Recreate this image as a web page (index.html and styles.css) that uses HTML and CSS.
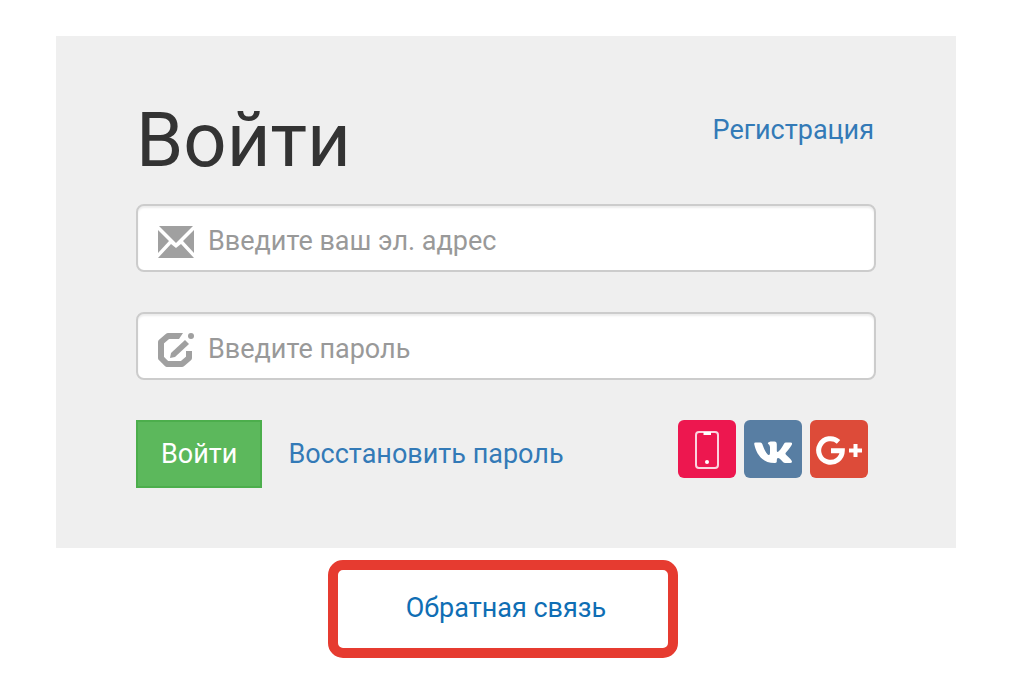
FILE: index.html
```html
<!DOCTYPE html>
<html lang="ru">

<head>
    <meta charset="UTF-8">
    <meta name="viewport" content="width=device-width, initial-scale=1.0">
    <title>Войти</title>
    <link rel="stylesheet" href="styles.css">
</head>

<body>
    <main class="page">
        <form class="login">
            <div class="login-head">
                <h1>Войти</h1>
                <a href="#">Регистрация</a>
            </div>

            <div class="field">
                <label for="email" aria-label="Эл. адрес">
                    <svg width="38" height="34" viewBox="0 0 38 34">
                        <path d="M2 1H36L19 18Z M1 5L12 16L1 28Z M37 5L26 16L37 28Z M1 33L14 19L19 23L24 19L37 33Z" />
                    </svg>
                </label>
                <input type="email" id="email" placeholder="Введите ваш эл. адрес">
            </div>

            <div class="field">
                <label for="password" aria-label="Пароль">
                    <svg width="38" height="36" viewBox="0 0 38 36">
                        <path class="line" d="M22 4H11L4 10V26L10 32H25L32 26V19" />
                        <path d="M22 1H26L22 7H19Z" />
                        <path d="M13 26L14 21L28 8L32 12L18 25Z" />
                        <circle cx="34" cy="4" r="3" />
                    </svg>
                </label>
                <input type="password" id="password" placeholder="Введите пароль">
            </div>

            <div class="login-foot">
                <button type="submit" class="btn">Войти</button>
                <a href="#">Восстановить пароль</a>
                <div class="social">
                    <a href="#" class="phone" aria-label="Телефон">
                        <svg width="58" height="58" viewBox="0 0 58 58">
                            <rect x="18" y="12" width="22" height="36" rx="3" />
                            <path d="M25.500 12V15H33V12Z" />
                            <circle cx="29" cy="42" r="2" />
                        </svg>
                    </a>
                    <a href="#" class="vk" aria-label="ВКонтакте">
                        <svg width="58" height="58" viewBox="0 0 58 58">
                            <path d="M30.500 43C18.500 43 12.500 34.500 10.200 24Q10 22.500 11.500 22.500H16.500Q17.800 22.500 18.300 24C20 29 22.500 34 24.500 35Q26 35.500 26 33V27Q25.800 24.500 23.800 23.500C24 22 26 21.500 28 21.500H30.500Q32.800 21.500 32.800 24.500V31Q33 32.700 34.500 31.500C37 29.500 38.500 26.500 40 23.800Q40.600 22.500 42 22.500H46.500Q48.800 22.500 47.800 24.700C46.500 27.500 43.500 30.500 41.800 32.700Q41 33.600 42 34.700C44 36.500 46.500 38.500 47.800 41Q48.500 43 46 43H41.500Q39.800 43 38.500 41.500C36.500 39.500 35.500 38 34 38Q32.800 38 32.800 40V41.500Q32.800 43 30.500 43Z" />
                        </svg>
                    </a>
                    <a href="#" class="google" aria-label="Google+">
                        <svg width="58" height="58" viewBox="0 0 58 58">
                            <path class="g" d="M28.500 21.800A11.800 11.800 0 1 0 32.300 30.700H21" />
                            <path class="plus" d="M39 30.500H52M45.500 24V37" />
                        </svg>
                    </a>
                </div>
            </div>
        </form>

        <a href="#" class="feedback">Обратная связь</a>
    </main>
</body>

</html>
```

FILE: styles.css
```css
* {
    box-sizing: border-box;
}

body {
    margin: 0;
    background: #fff;
    font-family: Roboto, "Liberation Sans", sans-serif;
    font-size: 27px;
    line-height: 40px;
    color: #333;
}

a {
    color: #337ab7;
    text-decoration: none;
}

svg {
    display: block;
}

.page {
    display: flex;
    flex-direction: column;
    align-items: center;
    gap: 12px;
    padding: 36px 58px 24px 56px;
}

/* форма входа */
.login {
    width: 100%;
    padding: 60px 80px;
    background: #efefef;
}

.login-head {
    display: flex;
    justify-content: space-between;
    align-items: flex-start;
    padding-right: 2px;
    margin-bottom: 20px;
}

.login-head h1 {
    margin: 0;
    font-size: 76px;
    font-weight: 400;
    line-height: 88px;
}

.login-head a {
    margin-top: 14px;
}

.field {
    display: flex;
    align-items: center;
    height: 68px;
    margin-bottom: 40px;
    padding: 0 19px;
    background: #fff;
    border: 2px solid #ccc;
    border-radius: 8px;
    box-shadow: inset 0 2px 2px rgba(0, 0, 0, .075);
}

.field label {
    margin: 8px 13px 0 0;
    fill: #a0a0a0;
}

.field .line {
    fill: none;
    stroke: #a0a0a0;
    stroke-width: 6px;
    stroke-linejoin: round;
}

.field input {
    flex: 1;
    min-width: 0;
    height: 100%;
    padding: 6px 0 0;
    border: 0;
    outline: 0;
    background: none;
    font: inherit;
    color: #555;
}

.field input::placeholder {
    color: #999;
    opacity: 1;
}

.login-foot {
    display: flex;
    align-items: center;
}

.btn {
    height: 68px;
    margin-right: 26px;
    padding: 0 23px;
    background: #5cb85c;
    border: 2px solid #4cae4c;
    font: inherit;
    color: #fff;
    cursor: pointer;
}

/* соцсети */
.social {
    display: flex;
    align-self: flex-start;
    gap: 8px;
    margin-left: auto;
    padding-right: 8px;
}

.social a {
    border-radius: 6px;
    fill: #fff;
}

.phone {
    background: #ed174f;
}

.phone rect {
    fill: none;
    stroke: #fbd3de;
    stroke-width: 2px;
}

.vk {
    background: #587ea3;
}

.google {
    background: #dd4b39;
}

.google path {
    fill: none;
    stroke: #fff;
}

.google .g {
    stroke-width: 5px;
}

.google .plus {
    stroke-width: 4px;
}

.feedback {
    margin-right: 6px;
    padding: 18px 62px 20px 68px;
    border: 10px solid #e63b30;
    border-radius: 15px;
    color: #0f6eb4;
}
```
